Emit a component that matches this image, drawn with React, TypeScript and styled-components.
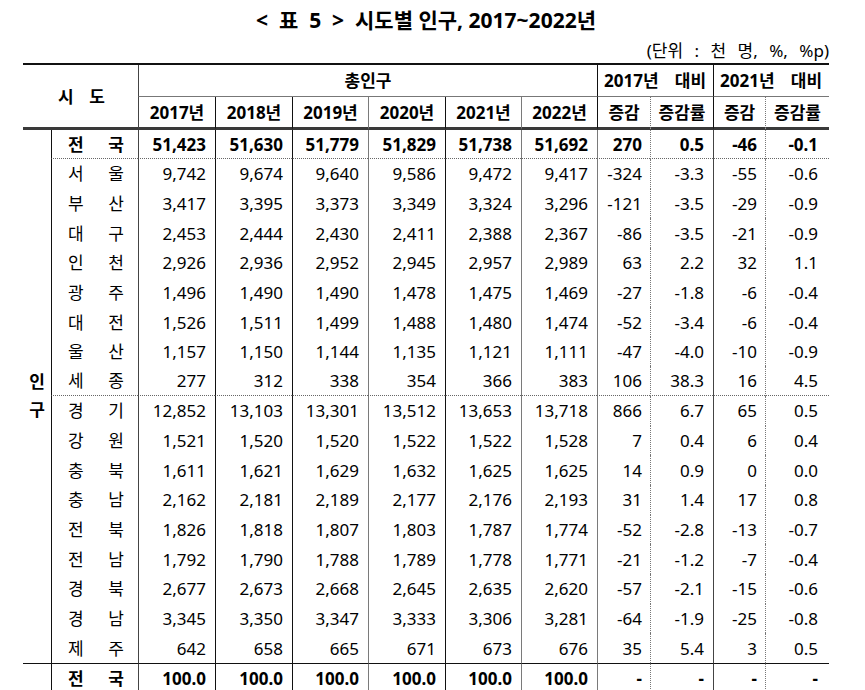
import React from "react";
import styled, { createGlobalStyle } from "styled-components";

const Global = createGlobalStyle`
  html, body { margin: 0; padding: 0; background: #fff; }
  body { font-family: "Noto Sans", "Noto Sans CJK KR", sans-serif; color: #000; }
`;

const Page = styled.div`
  padding: 6px 0 0 23px;
  width: 806px;
`;

const Title = styled.h1`
  margin: 0;
  font-size: 21px;
  font-weight: 700;
  line-height: 28px;
  text-align: center;
  white-space: pre;
`;

const Unit = styled.div`
  margin-top: 6px;
  font-size: 17px;
  line-height: 22px;
  text-align: right;
  word-spacing: 7px;
`;

const Table = styled.table`
  margin-top: 1px;
  width: 806px;
  table-layout: fixed;
  border-collapse: separate;
  border-spacing: 0;
  border-top: 2px solid #111;
  font-size: 17px;
`;

const HRow = styled.tr<{ $h: number }>`
  height: ${(p) => p.$h}px;
`;

const BRow = styled.tr<{ $h: number }>`
  height: ${(p) => p.$h}px;
`;

const Head = styled.th<{ $l?: string; $b?: string }>`
  box-sizing: border-box;
  padding: 0;
  font-weight: 700;
  text-align: center;
  vertical-align: middle;
  white-space: nowrap;
  line-height: 1;
  border-left: ${(p) => p.$l ?? "none"};
  border-bottom: ${(p) => p.$b ?? "none"};
`;

const Cell = styled.td<{
  $l?: string;
  $b?: string;
  $t?: string;
  $bold?: boolean;
  $pr?: number;
}>`
  box-sizing: border-box;
  padding: 0 ${(p) => p.$pr ?? 9}px 0 0;
  text-align: right;
  vertical-align: middle;
  white-space: nowrap;
  line-height: 1;
  font-weight: ${(p) => (p.$bold ? 700 : 400)};
  border-left: ${(p) => p.$l ?? "none"};
  border-bottom: ${(p) => p.$b ?? "none"};
  border-top: ${(p) => p.$t ?? "none"};
`;

const Side = styled.td<{ $t?: string }>`
  padding: 0;
  text-align: center;
  vertical-align: middle;
  font-weight: 700;
  line-height: 28px;
  border-top: ${(p) => p.$t ?? "none"};
`;

const Spread = styled.span<{ $pl: number; $pr: number }>`
  display: flex;
  justify-content: space-between;
  padding: 0 ${(p) => p.$pr}px 0 ${(p) => p.$pl}px;
`;

const Split = styled.span`
  display: flex;
  justify-content: space-between;
  padding: 0 7px 0 6px;
`;

const BLACK = "1px solid #111";
const DARK = "1px solid #444";
const GRAY = "1px solid #7a7a7a";
const DOT = "1px dotted #777";
const THICK = "3px solid #3a3a3a";
const MID = "1px solid #777";
const DOTLINE = "1px dotted #666";
const BOTTOM = "1px solid #111";

const bodyLeft = [
  undefined,
  BLACK,
  DARK,
  BLACK,
  BLACK,
  GRAY,
  BLACK,
  GRAY,
  GRAY,
  DOT,
  DARK,
  DOT,
];

const headLeft = [
  undefined,
  undefined,
  DARK,
  BLACK,
  BLACK,
  GRAY,
  BLACK,
  GRAY,
  BLACK,
  DOT,
  BLACK,
  DOT,
];

const padRight = [0, 0, 9, 9, 9, 9, 9, 9, 8, 9, 8, 11];

const widths = [28, 87, 77, 77, 76, 77, 76, 76, 53, 63, 52, 64];

type Row = string[];

const total: Row = ["전국", "51,423", "51,630", "51,779", "51,829", "51,738", "51,692", "270", "0.5", "-46", "-0.1"];

const rows: Row[] = [
  ["서울", "9,742", "9,674", "9,640", "9,586", "9,472", "9,417", "-324", "-3.3", "-55", "-0.6"],
  ["부산", "3,417", "3,395", "3,373", "3,349", "3,324", "3,296", "-121", "-3.5", "-29", "-0.9"],
  ["대구", "2,453", "2,444", "2,430", "2,411", "2,388", "2,367", "-86", "-3.5", "-21", "-0.9"],
  ["인천", "2,926", "2,936", "2,952", "2,945", "2,957", "2,989", "63", "2.2", "32", "1.1"],
  ["광주", "1,496", "1,490", "1,490", "1,478", "1,475", "1,469", "-27", "-1.8", "-6", "-0.4"],
  ["대전", "1,526", "1,511", "1,499", "1,488", "1,480", "1,474", "-52", "-3.4", "-6", "-0.4"],
  ["울산", "1,157", "1,150", "1,144", "1,135", "1,121", "1,111", "-47", "-4.0", "-10", "-0.9"],
  ["세종", "277", "312", "338", "354", "366", "383", "106", "38.3", "16", "4.5"],
  ["경기", "12,852", "13,103", "13,301", "13,512", "13,653", "13,718", "866", "6.7", "65", "0.5"],
  ["강원", "1,521", "1,520", "1,520", "1,522", "1,522", "1,528", "7", "0.4", "6", "0.4"],
  ["충북", "1,611", "1,621", "1,629", "1,632", "1,625", "1,625", "14", "0.9", "0", "0.0"],
  ["충남", "2,162", "2,181", "2,189", "2,177", "2,176", "2,193", "31", "1.4", "17", "0.8"],
  ["전북", "1,826", "1,818", "1,807", "1,803", "1,787", "1,774", "-52", "-2.8", "-13", "-0.7"],
  ["전남", "1,792", "1,790", "1,788", "1,789", "1,778", "1,771", "-21", "-1.2", "-7", "-0.4"],
  ["경북", "2,677", "2,673", "2,668", "2,645", "2,635", "2,620", "-57", "-2.1", "-15", "-0.6"],
  ["경남", "3,345", "3,350", "3,347", "3,333", "3,306", "3,281", "-64", "-1.9", "-25", "-0.8"],
  ["제주", "642", "658", "665", "671", "673", "676", "35", "5.4", "3", "0.5"],
];

const share: Row = ["전국", "100.0", "100.0", "100.0", "100.0", "100.0", "100.0", "-", "-", "-", "-"];

function Cells({ row, bold, bottom, top }: { row: Row; bold?: boolean; bottom?: string; top?: string }) {
  return (
    <>
      <Cell $l={bodyLeft[1]} $b={bottom} $t={top} $bold={bold} $pr={0}>
        <Spread $pl={16} $pr={14}>
          <span>{row[0][0]}</span>
          <span>{row[0][1]}</span>
        </Spread>
      </Cell>
      {row.slice(1).map((v, i) => (
        <Cell key={i} $l={bodyLeft[i + 2]} $b={bottom} $t={top} $bold={bold} $pr={padRight[i + 2]}>
          {v}
        </Cell>
      ))}
    </>
  );
}

export default function App() {
  const years = ["2017년", "2018년", "2019년", "2020년", "2021년", "2022년"];
  const changes = ["증감", "증감률", "증감", "증감률"];
  return (
    <>
      <Global />
      <Page>
        <Title>{"<\u00a0\u00a0표\u00a0\u00a05\u00a0\u00a0>\u00a0\u00a0시도별 인구, 2017~2022년"}</Title>
        <Unit>(단위 : 천 명, %, %p)</Unit>
        <Table>
          <colgroup>
            {widths.map((w, i) => (
              <col key={i} style={{ width: w }} />
            ))}
          </colgroup>
          <thead>
            <HRow $h={32}>
              <Head colSpan={2} rowSpan={2} $b={THICK}>
                <Spread $pl={35} $pr={33}>
                  <span>시</span>
                  <span>도</span>
                </Spread>
              </Head>
              <Head colSpan={6} $l={DARK} $b={MID}>
                총인구
              </Head>
              <Head colSpan={2} $l={BLACK} $b={MID}>
                <Split>
                  <span>2017년</span>
                  <span>대비</span>
                </Split>
              </Head>
              <Head colSpan={2} $l={BLACK} $b={MID}>
                <Split>
                  <span>2021년</span>
                  <span>대비</span>
                </Split>
              </Head>
            </HRow>
            <HRow $h={33}>
              {years.map((y, i) => (
                <Head key={y} $l={headLeft[i + 2]} $b={THICK}>
                  {y}
                </Head>
              ))}
              {changes.map((c, i) => (
                <Head key={i} $l={headLeft[i + 8]} $b={THICK}>
                  {c}
                </Head>
              ))}
            </HRow>
          </thead>
          <tbody>
            <BRow $h={29}>
              <Side rowSpan={18}>
                인<br />구
              </Side>
              <Cells row={total} bold bottom={DOTLINE} />
            </BRow>
            {rows.map((r, i) => (
              <BRow key={r[0]} $h={29.65}>
                <Cells row={r} bottom={i === 7 ? DOTLINE : undefined} />
              </BRow>
            ))}
            <BRow $h={30}>
              <Side $t={BOTTOM} />
              <Cells row={share} bold top={BOTTOM} />
            </BRow>
          </tbody>
        </Table>
      </Page>
    </>
  );
}
